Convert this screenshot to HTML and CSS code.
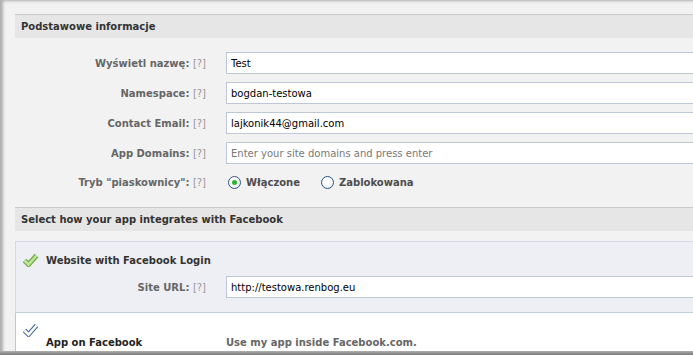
FILE: index.html
```html
<!DOCTYPE html>
<html lang="pl">
<head>
    <meta charset="UTF-8">
    <title>Ustawienia aplikacji</title>
    <link rel="stylesheet" href="styles.css">
</head>
<body>
    <div class="window">
        <div class="content">
            <div class="section-head">Podstawowe informacje</div>
            <div class="rows">
                <div class="row">
                    <label class="label" for="name">Wyświetl nazwę: <span class="help">[?]</span></label>
                    <input type="text" id="name" value="Test">
                </div>
                <div class="row">
                    <label class="label" for="ns">Namespace: <span class="help">[?]</span></label>
                    <input type="text" id="ns" value="bogdan-testowa">
                </div>
                <div class="row">
                    <label class="label" for="email">Contact Email: <span class="help">[?]</span></label>
                    <input type="text" id="email" value="lajkonik44@gmail.com">
                </div>
                <div class="row">
                    <label class="label" for="domains">App Domains: <span class="help">[?]</span></label>
                    <input type="text" id="domains" placeholder="Enter your site domains and press enter">
                </div>
                <div class="row row-radio">
                    <span class="label">Tryb "piaskownicy": <span class="help">[?]</span></span>
                    <span class="radio checked"></span><span class="radio-text">Włączone</span>
                    <span class="radio second"></span><span class="radio-text">Zablokowana</span>
                </div>
            </div>

            <div class="section-head second-head">Select how your app integrates with Facebook</div>

            <div class="panel panel-active">
                <div class="panel-title">
                    <svg class="check" width="17" height="14" viewBox="0 0 17 14">
                        <path d="M2.5 7.5 L6.5 11.5 L14.5 2.5" fill="none" stroke="#6ea845" stroke-width="5" stroke-linejoin="miter"/>
                        <path d="M2.5 7.5 L6.5 11.5 L14.5 2.5" fill="none" stroke="#c2e59c" stroke-width="2.6" stroke-linejoin="miter"/>
                    </svg>
                    <span>Website with Facebook Login</span>
                </div>
                <div class="row">
                    <label class="label label-panel" for="url">Site URL: <span class="help">[?]</span></label>
                    <input type="text" id="url" value="http://testowa.renbog.eu">
                </div>
            </div>

            <div class="panel panel-off">
                <svg class="check check-off" width="17" height="14" viewBox="0 0 17 14">
                    <path d="M2.5 7.5 L6.5 11.5 L14.5 2.5" fill="none" stroke="#3f5f9f" stroke-width="4.6"/>
                    <path d="M2.5 7.5 L6.5 11.5 L14.5 2.5" fill="none" stroke="#fff" stroke-width="2.6"/>
                </svg>
                <div class="off-row">
                    <span class="off-title">App on Facebook</span>
                    <span class="off-desc">Use my app inside Facebook.com.</span>
                </div>
            </div>
        </div>
    </div>
    <div class="bottom-shadow"></div>
</body>
</html>
```

FILE: styles.css
```css
body {
    margin: 0;
    background: #888;
    font-family: "DejaVu Sans", Verdana, sans-serif;
    font-size: 10px;
}
.window {
    height: 351px;
    overflow: hidden;
    box-sizing: border-box;
    padding: 14px 0 0 15px;
    background: #f2f2f2;
    box-shadow: inset 4px 2px 3px -1px rgba(0, 0, 0, 0.28);
}
.content {
    width: 760px;
}
.section-head {
    height: 23px;
    line-height: 23px;
    padding-left: 6px;
    border-top: 1px solid #cbcbcb;
    background: #e6e6e6;
    color: #333;
    font-weight: bold;
}
.second-head {
    margin-top: 15px;
}
.rows {
    display: flex;
    flex-direction: column;
    gap: 8px;
    padding-top: 14px;
}
.row {
    display: flex;
    align-items: center;
    height: 22px;
}
.row-radio {
    height: 20px;
}
.label {
    width: 191px;
    margin-right: 20px;
    text-align: right;
    font-weight: bold;
    color: #666;
}
.label-panel {
    width: 190px;
}
.help {
    font-weight: normal;
    color: #999;
}
input {
    width: 480px;
    height: 22px;
    box-sizing: border-box;
    margin: 0;
    padding: 0 4px;
    border: 1px solid #bdc7d8;
    background: #fff;
    font-family: inherit;
    font-size: 10px;
    color: #000;
    outline: none;
}
input::placeholder {
    color: #777;
}
.radio {
    width: 13px;
    height: 13px;
    box-sizing: border-box;
    margin-left: 2px;
    border: 1px solid #2e5580;
    border-radius: 50%;
    background: radial-gradient(circle at 40% 35%, #fff 30%, #dde3ea 100%);
    position: relative;
}
.radio.checked::after {
    content: "";
    position: absolute;
    left: 3px;
    top: 3px;
    width: 5px;
    height: 5px;
    border-radius: 50%;
    background: #28b528;
}
.radio.second {
    margin-left: 21px;
}
.radio-text {
    margin-left: 5px;
    font-weight: bold;
    color: #4d4d4d;
}
.panel {
    border-left: 1px solid #d4d9e3;
}
.panel-active {
    margin-top: 10px;
    padding: 10px 0 14px;
    border-top: 1px solid #d4dae6;
    border-bottom: 1px solid #c8cfdc;
    background: #edeff4;
}
.panel-title {
    display: flex;
    align-items: center;
    height: 16px;
    margin-bottom: 8px;
    font-weight: bold;
    color: #333;
}
.check {
    display: block;
    margin: 0 7px 0 6px;
    flex: none;
}
.panel-off {
    height: 60px;
    padding-top: 10px;
    background: #fff;
    border-left-color: #c6c6c6;
}
.off-row {
    display: flex;
    line-height: 12px;
    font-weight: bold;
}
.off-title {
    width: 180px;
    padding-left: 30px;
    color: #222;
}
.off-desc {
    color: #666;
}
.bottom-shadow {
    height: 4px;
    background: linear-gradient(#b0b0b0, #7a7a7a);
}
```
